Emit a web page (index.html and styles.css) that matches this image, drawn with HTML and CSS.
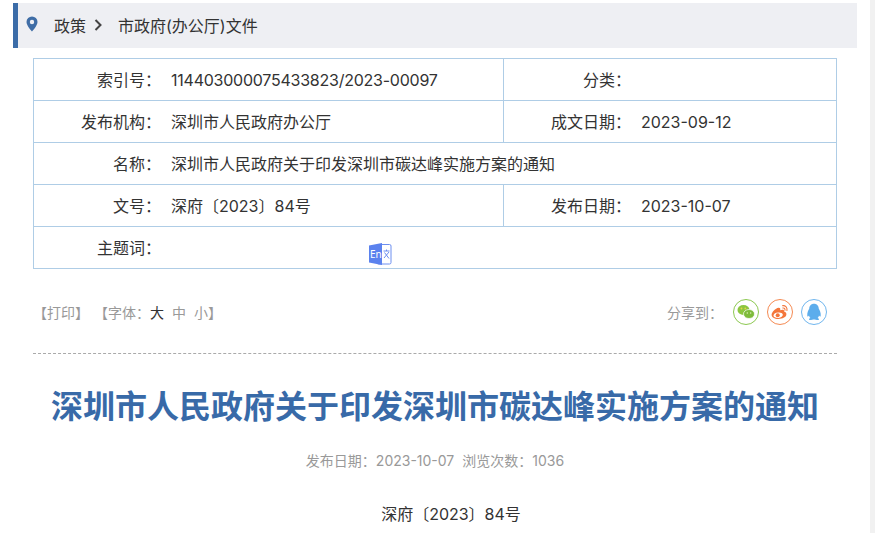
FILE: index.html
```html
<!DOCTYPE html>
<html lang="zh-CN">
<head>
<meta charset="utf-8">
<title>深圳市人民政府关于印发深圳市碳达峰实施方案的通知</title>
<link rel="stylesheet" href="styles.css">
</head>
<body>
<div class="page">
  <nav class="crumb">
    <svg class="pin" width="12" height="16" viewBox="0 0 12 16"><path fill="#3f6da6" fill-rule="evenodd" d="M6 .5A5.5 5.5 0 0 0 .5 6c0 3.8 5.5 9.5 5.5 9.5S11.500 9.800 11.500 6A5.500 5.500 0 0 0 6 .5zM6 3.800a2.200 2.200 0 1 1 0 4.400 2.200 2.200 0 0 1 0-4.400z"/></svg>
    <span class="crumb-a">政策</span>
    <svg class="chev" width="9" height="12" viewBox="0 0 9 12"><path d="M1.500 1 6.500 6l-5 5" fill="none" stroke="#444" stroke-width="2"/></svg>
    <span class="crumb-b">市政府(办公厅)文件</span>
  </nav>

  <section class="meta">
    <div class="row">
      <div class="cell main"><span class="k">索引号：</span><span class="v v-id">114403000075433823/2023-00097</span></div>
      <div class="cell side"><span class="k">分类：</span><span class="v"></span></div>
    </div>
    <div class="row">
      <div class="cell main"><span class="k">发布机构：</span><span class="v">深圳市人民政府办公厅</span></div>
      <div class="cell side"><span class="k">成文日期：</span><span class="v">2023-09-12</span></div>
    </div>
    <div class="row">
      <div class="cell full"><span class="k">名称：</span><span class="v">深圳市人民政府关于印发深圳市碳达峰实施方案的通知</span></div>
    </div>
    <div class="row">
      <div class="cell main"><span class="k">文号：</span><span class="v">深府〔2023〕84号</span></div>
      <div class="cell side"><span class="k">发布日期：</span><span class="v">2023-10-07</span></div>
    </div>
    <div class="row">
      <div class="cell full"><span class="k">主题词：</span><span class="v"></span></div>
    </div>
    <svg class="trans" width="24" height="24" viewBox="0 0 24 24">
      <rect x="9" y="2.500" width="14" height="19.500" rx="1.500" fill="#fff" stroke="#6d8ff0"/>
      <path d="M1 3.500 14 1v22L1 20.500z" fill="#5b82ee"/>
      <path d="M15.500 9h6M18.500 7.500V9M16 16l5-6M16.500 10.500l4.500 6" fill="none" stroke="#6d8ff0"/>
      <text x="2" y="16" class="trans-t">En</text>
    </svg>
  </section>

  <div class="tools">
    <div class="tools-l">
      <span>【打印】</span>
      <span class="font-tools">【字体：<b class="on">大</b><b>中</b><b>小</b>】</span>
    </div>
    <div class="tools-r">
      <span class="share">分享到：</span>
      <span class="ico wx">
        <svg width="18" height="16" viewBox="0 0 18 16"><ellipse cx="6.500" cy="6" rx="6" ry="5" fill="#8cc63f"/><circle cx="4.500" cy="4.500" r=".9" fill="#e6d34a"/><circle cx="8.300" cy="4.500" r=".9" fill="#e6d34a"/><ellipse cx="12" cy="10" rx="5.500" ry="4.500" fill="#7dbb3a" stroke="#fff" stroke-width=".7"/><circle cx="10.300" cy="9" r=".7" fill="#e6f0c0"/><circle cx="13.700" cy="9" r=".7" fill="#e6f0c0"/></svg>
      </span>
      <span class="ico wb">
        <svg width="18" height="16" viewBox="0 0 18 16"><path fill="#f4763b" fill-rule="evenodd" d="M7.200 15C3.500 15 .6 13.300.6 10.800.6 8.400 4.500 4.200 7.500 3.800c1.800-.2 2 1.100 1.700 2.500 2-.9 4.400-.8 3.900 1.300 1.500.5 2.300 1.400 2.300 2.700C15.400 13 11.700 15 7.200 15zM7 8.500c-2.700.2-4.700 1.700-4.500 3.300.2 1.500 2.500 2.400 5 2.100 2.600-.3 4.500-1.700 4.300-3.300C11.600 9 9.500 8.200 7 8.500z"/><circle cx="6.700" cy="11.200" r="2" fill="#f4763b"/><path d="M11.500 1.700c2.600-.6 5 1.600 4.500 4.800M11.800 4c1.300-.3 2.400.8 2.200 2.300" fill="none" stroke="#f4763b" stroke-width="1.100" stroke-linecap="round"/></svg>
      </span>
      <span class="ico qq">
        <svg width="16" height="18" viewBox="0 0 16 18"><path fill="#5cadec" d="M8 .8c3 0 4.700 2.200 4.800 5 .9 1.300 2.300 4.200 1.900 7.100-.2 1.100-1 .8-1.700-.5-.2 1-.7 1.900-1.400 2.500.9.400 1.600.9 1.400 1.500-.3.800-2.900.9-4.300.2H7.300c-1.400.7-4 .6-4.300-.2-.2-.6.500-1.100 1.400-1.500-.7-.6-1.200-1.500-1.400-2.500-.7 1.300-1.500 1.600-1.700.5-.4-2.900 1-5.800 1.900-7.100C3.300 3 5 .8 8 .8z"/></svg>
      </span>
    </div>
  </div>

  <article class="article">
    <h1>深圳市人民政府关于印发深圳市碳达峰实施方案的通知</h1>
    <p class="info"><span>发布日期：2023-10-07</span><span>浏览次数：1036</span></p>
    <p class="docno">深府〔2023〕84号</p>
  </article>
</div>
</body>
</html>
```

FILE: styles.css
```css
html, body {
  margin: 0;
  padding: 0;
  height: 533px;
  overflow: hidden;
  background: #fff;
}
body {
  border-right: 5px solid #f1f1f1;
  font-family: "Inter", "Noto Sans CJK SC", sans-serif;
  color: #333;
  font-size: 16px;
}
.page {
  width: 844px;
  margin-left: 13px;
  padding-top: 3px;
}
.crumb {
  height: 45px;
  box-sizing: border-box;
  background: #eeeff3;
  border-left: 5px solid #3b6ca8;
  display: flex;
  align-items: center;
  padding: 0 0 2px 8px;
  font-size: 16px;
  color: #333;
}
.pin { margin-right: 16px; margin-top: -1px; }
.crumb-a { margin-right: 8px; }
.chev { margin-right: 15px; }
.meta {
  position: relative;
  margin: 10px 20px 0;
  border: 1px solid #afcde6;
  border-bottom: 0;
  color: #333;
}
.row {
  display: flex;
  height: 42px;
  box-sizing: border-box;
  border-bottom: 1px solid #afcde6;
}
.cell {
  display: flex;
  align-items: center;
  line-height: 41px;
  padding-top: 2px;
  box-sizing: border-box;
}
.main { width: 470px; border-right: 1px solid #afcde6; }
.side { flex: 1; }
.full { flex: 1; }
.k { width: 127px; text-align: right; flex: none; margin-right: 10px; }
.v { white-space: nowrap; }
.v-id { letter-spacing: -.24px; }
.trans { position: absolute; left: 334px; top: 183px; }
.trans-t { font: 10px "Noto Sans", sans-serif; fill: #fff; }
.tools {
  display: flex;
  justify-content: space-between;
  align-items: center;
  margin: 28px 30px 0 20px;
  height: 29px;
  font-size: 14px;
  color: #999;
}
.font-tools { margin-left: 1px; }
.font-tools b { font-weight: 400; margin-right: 8px; }
.font-tools b.on { color: #333; }
.font-tools b:last-of-type { margin-right: 0; }
.tools-r { display: flex; align-items: center; gap: 8px; }
.share { margin-right: 2px; }
.ico {
  width: 26px;
  height: 26px;
  box-sizing: border-box;
  border-radius: 50%;
  border: 1px solid;
  display: flex;
  align-items: center;
  justify-content: center;
}
.wx { border-color: #8cc850; }
.wb { border-color: #f58a52; }
.qq { border-color: #70b6ee; }
.article {
  margin: 27px 20px 0;
  border-top: 1px dashed #aaa;
  text-align: center;
}
h1 {
  margin: 33px 0 0;
  font-size: 32px;
  line-height: 40px;
  font-weight: 700;
  color: #386aa8;
  white-space: nowrap;
}
.info {
  margin: 24px 0 0;
  font-size: 14px;
  line-height: 20px;
  color: #999;
  display: flex;
  justify-content: center;
  gap: 8px;
}
.docno {
  margin: 33px 0 0;
  font-size: 16px;
  line-height: 20px;
  text-indent: 32px;
  color: #333;
}
```
